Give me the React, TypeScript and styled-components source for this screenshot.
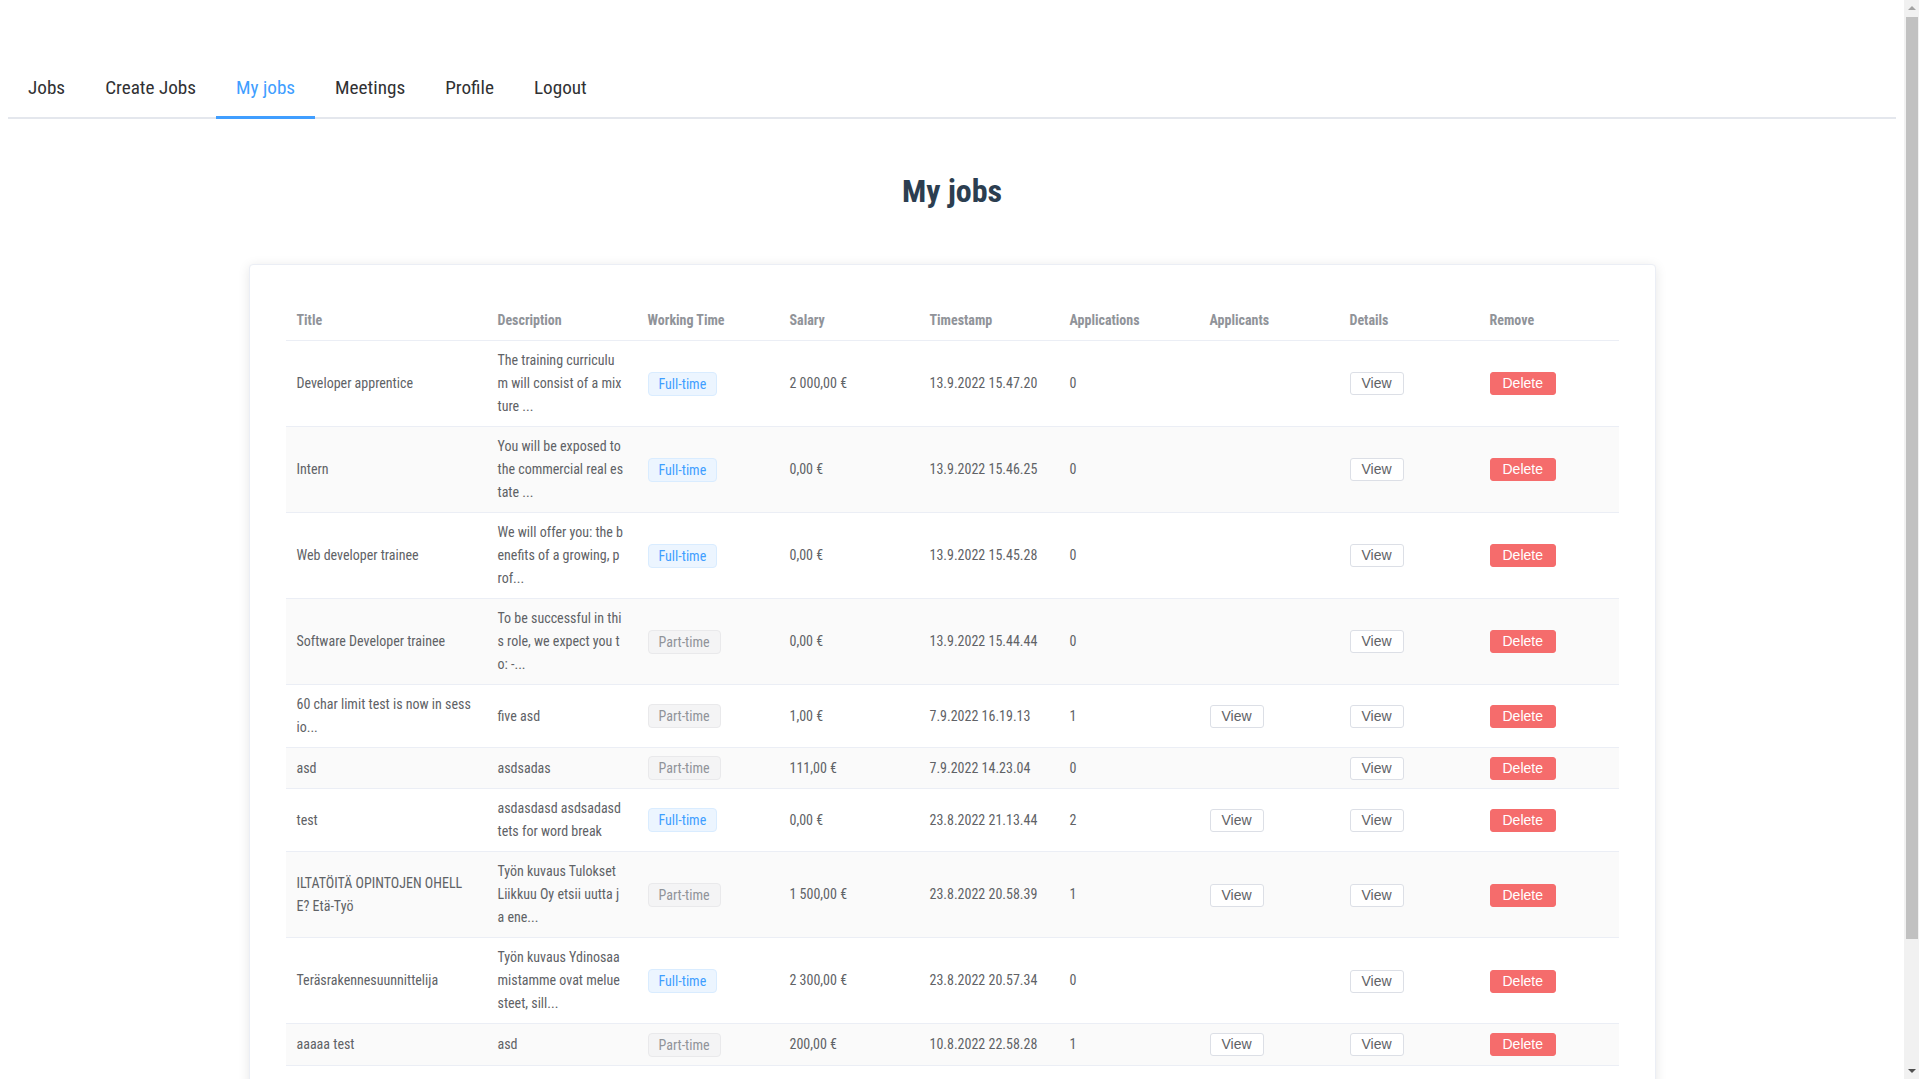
import React from "react";
import styled, { createGlobalStyle } from "styled-components";

const GlobalStyle = createGlobalStyle`
  html { background: #fff; }
  body {
    margin: 8px 23px 8px 8px;
    font-family: "Roboto Condensed", "Roboto", "Liberation Sans Narrow", sans-serif;
    font-stretch: condensed;
    color: #606266;
  }
`;

const ScrollTrack = styled.div`
  position: fixed;
  top: 0;
  right: 0;
  width: 15px;
  height: 100vh;
  background: #f1f1f1;
  display: flex;
  flex-direction: column;
  z-index: 10;
`;

const ScrollArrow = styled.div<{ $down?: boolean }>`
  height: 17px;
  display: flex;
  align-items: center;
  justify-content: center;
  &::before {
    content: "";
    width: 0;
    height: 0;
    border-left: 4px solid transparent;
    border-right: 4px solid transparent;
    ${(p) =>
      p.$down
        ? "border-top: 4px solid #505050; margin-top: 1px;"
        : "border-bottom: 4px solid #a3a3a3; margin-top: -1px;"}
  }
`;

const ScrollThumb = styled.div`
  height: 922px;
  margin: 0 1px 0 2px;
  background: #c1c1c1;
`;

const ScrollSpacer = styled.div`
  flex: 1;
`;

const Header = styled.header`
  padding-top: 52px;
`;

const TabBar = styled.nav`
  display: flex;
  border-bottom: 2px solid #e4e7ed;
`;

const Tab = styled.a<{ $active?: boolean }>`
  position: relative;
  display: block;
  height: 57px;
  line-height: 55px;
  padding: 0 20px;
  font-size: 19.2px;
  color: ${(p) => (p.$active ? "#409eff" : "#303133")};
  text-decoration: none;
  cursor: pointer;
  &::after {
    content: "";
    position: absolute;
    left: 0;
    right: 0;
    bottom: -2px;
    height: 3px;
    background: ${(p) => (p.$active ? "#409eff" : "transparent")};
  }
`;

const Heading = styled.h1`
  margin: 53px 0 54px;
  text-align: center;
  font-size: 32px;
  line-height: 38px;
  font-weight: 700;
  color: #2c3e50;
`;

const Card = styled.section`
  box-sizing: border-box;
  width: 1407px;
  margin: 0 auto 113px;
  padding: 36px 36px 35px;
  background: #fff;
  border: 1px solid #ebeef5;
  border-radius: 4px;
  box-shadow: 0 2px 12px 0 rgba(0, 0, 0, 0.1);
`;

const Table = styled.table`
  width: 100%;
  border-collapse: collapse;
  table-layout: fixed;
  font-size: 14px;
`;

const Col = styled.col<{ $w?: number }>`
  width: ${(p) => (p.$w ? `${p.$w}px` : "auto")};
`;

const HeadCell = styled.th`
  text-align: left;
  padding: 8px 13px 8px 11px;
  line-height: 23px;
  font-weight: 700;
  color: #909399;
  border-bottom: 1px solid #ebeef5;
`;

const BodyRow = styled.tr<{ $striped: boolean }>`
  background: ${(p) => (p.$striped ? "#fafafa" : "#ffffff")};
`;

const Cell = styled.td`
  padding: 8px 13px 8px 11px;
  line-height: 23px;
  color: #606266;
  border-bottom: 1px solid #ebeef5;
  vertical-align: middle;
  word-break: break-all;
`;

const Tag = styled.span<{ $full: boolean }>`
  display: inline-block;
  box-sizing: border-box;
  height: 24px;
  line-height: 22px;
  padding: 0 10px;
  border: 1px solid ${(p) => (p.$full ? "#d9ecff" : "#e9e9eb")};
  border-radius: 4px;
  background: ${(p) => (p.$full ? "#ecf5ff" : "#f4f4f5")};
  color: ${(p) => (p.$full ? "#409eff" : "#909399")};
  font-size: 14px;
  white-space: nowrap;
  vertical-align: middle;
`;

const Button = styled.button<{ $danger?: boolean }>`
  box-sizing: border-box;
  height: 23px;
  padding: 0 ${(p) => (p.$danger ? 12 : 11)}px;
  font-family: "Liberation Sans", Arial, sans-serif;
  font-size: 14px;
  line-height: 21px;
  border-radius: 3px;
  border: 1px solid ${(p) => (p.$danger ? "#f56c6c" : "#dcdfe6")};
  background: ${(p) => (p.$danger ? "#f56c6c" : "#ffffff")};
  color: ${(p) => (p.$danger ? "#ffffff" : "#606266")};
  vertical-align: middle;
  cursor: pointer;
`;

type Job = {
  title: string;
  desc: string;
  full: boolean;
  salary: string;
  ts: string;
  apps: number;
};

const jobs: Job[] = [
  { title: "Developer apprentice", desc: "The training curriculum will consist of a mixture ...", full: true, salary: "2\u00a0000,00 €", ts: "13.9.2022 15.47.20", apps: 0 },
  { title: "Intern", desc: "You will be exposed to the commercial real estate ...", full: true, salary: "0,00 €", ts: "13.9.2022 15.46.25", apps: 0 },
  { title: "Web developer trainee", desc: "We will offer you: the benefits of a growing, prof...", full: true, salary: "0,00 €", ts: "13.9.2022 15.45.28", apps: 0 },
  { title: "Software Developer trainee", desc: "To be successful in this role, we expect you to: -...", full: false, salary: "0,00 €", ts: "13.9.2022 15.44.44", apps: 0 },
  { title: "60 char limit test is now in sessio...", desc: "five asd", full: false, salary: "1,00 €", ts: "7.9.2022 16.19.13", apps: 1 },
  { title: "asd", desc: "asdsadas", full: false, salary: "111,00 €", ts: "7.9.2022 14.23.04", apps: 0 },
  { title: "test", desc: "asdasdasd asdsadasd tets for word break", full: true, salary: "0,00 €", ts: "23.8.2022 21.13.44", apps: 2 },
  { title: "ILTATÖITÄ OPINTOJEN OHELLE? Etä-Työ", desc: "Työn kuvaus Tulokset Liikkuu Oy etsii uutta ja ene...", full: false, salary: "1\u00a0500,00 €", ts: "23.8.2022 20.58.39", apps: 1 },
  { title: "Teräsrakennesuunnittelija", desc: "Työn kuvaus Ydinosaamistamme ovat meluesteet, sill...", full: true, salary: "2\u00a0300,00 €", ts: "23.8.2022 20.57.34", apps: 0 },
  { title: "aaaaa test", desc: "asd", full: false, salary: "200,00 €", ts: "10.8.2022 22.58.28", apps: 1 },
];

const tabs = ["Jobs", "Create Jobs", "My jobs", "Meetings", "Profile", "Logout"];
const headers = ["Title", "Description", "Working Time", "Salary", "Timestamp", "Applications", "Applicants", "Details", "Remove"];

export default function App() {
  return (
    <>
      <GlobalStyle />
      <ScrollTrack aria-hidden>
        <ScrollArrow />
        <ScrollThumb />
        <ScrollSpacer />
        <ScrollArrow $down />
      </ScrollTrack>
      <Header>
        <TabBar>
          {tabs.map((t) => (
            <Tab key={t} $active={t === "My jobs"}>
              {t}
            </Tab>
          ))}
        </TabBar>
      </Header>
      <main>
        <Heading>My jobs</Heading>
        <Card>
          <Table>
            <colgroup>
              <Col $w={201} />
              <Col $w={150} />
              <Col $w={142} />
              <Col />
              <Col />
              <Col />
              <Col />
              <Col />
              <Col />
            </colgroup>
            <thead>
              <tr>
                {headers.map((h) => (
                  <HeadCell key={h}>{h}</HeadCell>
                ))}
              </tr>
            </thead>
            <tbody>
              {jobs.map((j, i) => (
                <BodyRow key={i} $striped={i % 2 === 1}>
                  <Cell>{j.title}</Cell>
                  <Cell>{j.desc}</Cell>
                  <Cell>
                    <Tag $full={j.full}>{j.full ? "Full-time" : "Part-time"}</Tag>
                  </Cell>
                  <Cell>{j.salary}</Cell>
                  <Cell>{j.ts}</Cell>
                  <Cell>{j.apps}</Cell>
                  <Cell>{j.apps > 0 && <Button>View</Button>}</Cell>
                  <Cell>
                    <Button>View</Button>
                  </Cell>
                  <Cell>
                    <Button $danger>Delete</Button>
                  </Cell>
                </BodyRow>
              ))}
            </tbody>
          </Table>
        </Card>
      </main>
    </>
  );
}
